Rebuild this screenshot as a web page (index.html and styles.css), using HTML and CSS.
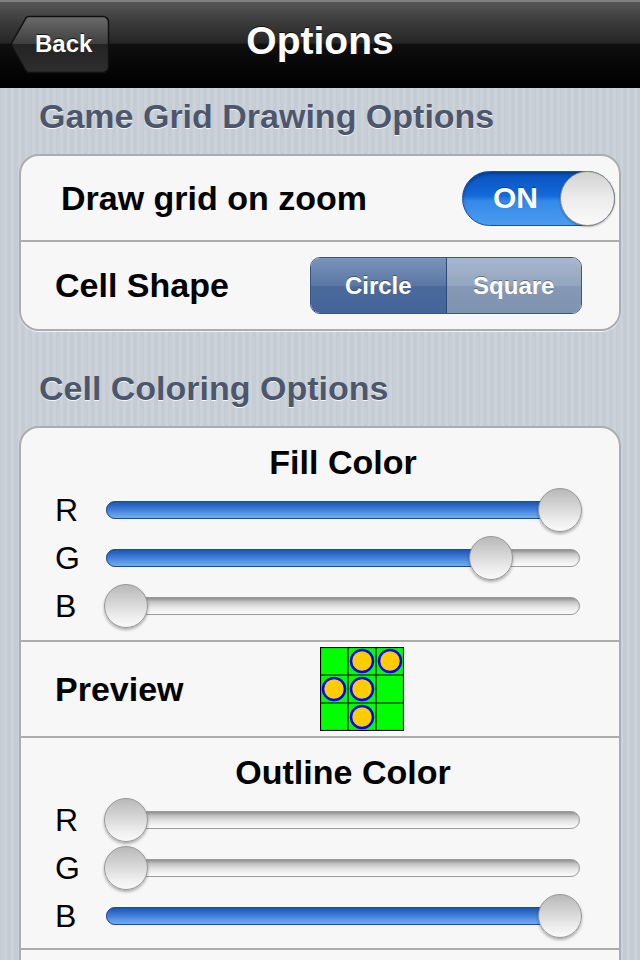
FILE: index.html
```html
<!DOCTYPE html>
<html lang="en">
<head>
    <meta charset="UTF-8">
    <meta name="viewport" content="width=device-width, initial-scale=1.0">
    <title>Options</title>
    <link rel="stylesheet" href="styles.css">
</head>
<body>
    <header class="navbar">
        <a class="back-btn" href="#">
            <svg class="back-shape" width="100" height="60" viewBox="0 0 100 60">
                <defs>
                    <linearGradient id="backFill" x1="0" y1="0" x2="0" y2="1">
                        <stop offset="0" stop-color="#6b6b6b"/>
                        <stop offset="0.5" stop-color="#3d3d3d"/>
                        <stop offset="0.5" stop-color="#242424"/>
                        <stop offset="1" stop-color="#2e2e2e"/>
                    </linearGradient>
                </defs>
                <path d="M19 1.5 H93 A5.5 5.5 0 0 1 98.5 7 V52 A5.5 5.5 0 0 1 93 57.5 H19 Q17 57.5 16 56 L2 31.5 Q1.2 29.5 2 27.5 L16 3 Q17 1.5 19 1.5 Z" fill="url(#backFill)" stroke="#111" stroke-width="1.5"/>
            </svg>
            <span class="back-label">Back</span>
        </a>
        <h1 class="nav-title">Options</h1>
        <span></span>
    </header>

    <main class="content">
        <h2 class="group-title">Game Grid Drawing Options</h2>
        <section class="card">
            <div class="row row-switch">
                <span class="row-label">Draw grid on zoom</span>
                <div class="switch">
                    <span class="switch-text">ON</span>
                    <span class="switch-knob"></span>
                </div>
            </div>
            <div class="row row-segment">
                <span class="row-label">Cell Shape</span>
                <div class="segmented">
                    <span class="seg active">Circle</span>
                    <span class="seg">Square</span>
                </div>
            </div>
        </section>

        <h2 class="group-title second">Cell Coloring Options</h2>
        <section class="card">
            <div class="color-block">
                <span class="block-title">Fill Color</span>
                <span class="channel">R</span>
                <div class="track" style="--v: 1"><div class="fill"></div><span class="thumb"></span></div>
                <span class="channel">G</span>
                <div class="track" style="--v: 0.84"><div class="fill"></div><span class="thumb"></span></div>
                <span class="channel">B</span>
                <div class="track" style="--v: 0"><div class="fill"></div><span class="thumb"></span></div>
            </div>

            <div class="row row-preview">
                <span class="row-label">Preview</span>
                <svg class="preview" width="84" height="84" viewBox="0 0 84 84">
                    <rect x="0.5" y="0.5" width="83" height="83" fill="#00ff00" stroke="#000" stroke-width="1.2"/>
                    <path d="M28 0 V84 M56 0 V84 M0 28 H84 M0 56 H84" stroke="#000" stroke-width="1.2"/>
                    <g fill="#ffcc00" stroke="#0000ff" stroke-width="2.5">
                        <circle cx="42" cy="14" r="11"/>
                        <circle cx="70" cy="14" r="11"/>
                        <circle cx="14" cy="42" r="11"/>
                        <circle cx="42" cy="42" r="11"/>
                        <circle cx="42" cy="70" r="11"/>
                    </g>
                </svg>
            </div>

            <div class="color-block">
                <span class="block-title">Outline Color</span>
                <span class="channel">R</span>
                <div class="track" style="--v: 0"><div class="fill"></div><span class="thumb"></span></div>
                <span class="channel">G</span>
                <div class="track" style="--v: 0"><div class="fill"></div><span class="thumb"></span></div>
                <span class="channel">B</span>
                <div class="track" style="--v: 1"><div class="fill"></div><span class="thumb"></span></div>
            </div>

            <div class="row row-empty"></div>
        </section>
    </main>
</body>
</html>
```

FILE: styles.css
```css
html, body {
    height: 100%;
    overflow: hidden;
}

body {
    margin: 0;
    font-family: "Liberation Sans", Arial, sans-serif;
    background: repeating-linear-gradient(90deg, #c5ccd4 0, #c5ccd4 4px, #cbd2d9 4px, #cbd2d9 7px);
    color: #000;
}

/* top bar */
.navbar {
    height: 88px;
    box-sizing: border-box;
    display: grid;
    grid-template-columns: 1fr auto 1fr;
    align-items: center;
    padding: 0 10px;
    border-top: 2px solid #808080;
    border-bottom: 1px solid #000;
    background: linear-gradient(#565656 0%, #3a3a3a 25%, #262626 48%, #0f0f0f 50%, #050505 80%, #000 100%);
}

.back-btn {
    position: relative;
    width: 100px;
    height: 60px;
    display: flex;
    align-items: center;
    text-decoration: none;
}

.back-shape {
    position: absolute;
    left: 0;
    top: 0;
}

.back-label {
    position: relative;
    padding-left: 25px;
    margin-top: -2px;
    color: #fff;
    font-size: 24px;
    font-weight: bold;
    text-shadow: 0 -1px 0 rgba(0, 0, 0, 0.7);
}

.nav-title {
    margin: 0 0 7px;
    color: #fff;
    font-size: 39px;
    font-weight: bold;
    text-shadow: 0 -1px 0 rgba(0, 0, 0, 0.7);
}

/* grouped list */
.content {
    padding: 0 19px;
}

.group-title {
    margin: 0;
    padding: 8px 0 18px 20px;
    line-height: 40px;
    font-size: 34px;
    font-weight: bold;
    color: #4c566c;
    text-shadow: 0 1px 0 rgba(255, 255, 255, 0.85);
}

.group-title.second {
    padding-top: 37px;
}

.card {
    background: #f7f7f7;
    border: 2px solid #aaadb1;
    border-radius: 20px;
    box-shadow: 0 1px 0 rgba(255, 255, 255, 0.7);
}

.row {
    display: flex;
    align-items: center;
    justify-content: space-between;
}

.row + .row,
.row + .color-block,
.color-block + .row {
    border-top: 2px solid #acacac;
}

.row-label {
    font-size: 34px;
    font-weight: bold;
}

.row-switch {
    height: 84px;
    padding: 0 4px 0 40px;
}

.row-segment {
    height: 87px;
    padding: 0 37px 0 34px;
}

.row-preview {
    height: 94px;
    padding: 0 0 0 34px;
    justify-content: flex-start;
}

.row-empty {
    height: 80px;
}

/* switch */
.switch {
    width: 153px;
    height: 55px;
    box-sizing: border-box;
    border-radius: 28px;
    border: 1px solid #1f4f96;
    background: linear-gradient(#0652c0 0%, #1569d8 45%, #3489e8 55%, #4b9bf0 100%);
    display: flex;
    align-items: center;
    justify-content: space-between;
    box-shadow: inset 0 2px 3px rgba(0, 0, 0, 0.3);
}

.switch-text {
    padding-left: 30px;
    color: #fff;
    font-size: 30px;
    font-weight: bold;
    text-shadow: 0 -1px 0 rgba(0, 0, 0, 0.3);
}

.switch-knob {
    width: 55px;
    height: 55px;
    margin-right: -1px;
    box-sizing: border-box;
    border-radius: 50%;
    border: 1px solid #8e8e8e;
    background: linear-gradient(#d2d2d2 0%, #ececec 50%, #fafafa 100%);
    box-shadow: 0 1px 2px rgba(0, 0, 0, 0.3);
}

/* segmented control */
.segmented {
    width: 272px;
    height: 57px;
    box-sizing: border-box;
    display: flex;
    border: 1px solid #3a5682;
    border-radius: 10px;
    overflow: hidden;
}

.seg {
    flex: 1;
    display: flex;
    align-items: center;
    justify-content: center;
    color: #fff;
    font-size: 24px;
    font-weight: bold;
    text-shadow: 0 -1px 0 rgba(0, 0, 0, 0.35);
    background: linear-gradient(#a8b7cc 0%, #93a5bf 50%, #8598b5 52%, #7f93b1 100%);
}

.seg.active {
    border-right: 1px solid #2c4878;
    background: linear-gradient(#7a94bb 0%, #5a77a4 50%, #4b6a9b 52%, #44649a 100%);
}

/* colour sliders */
.color-block {
    display: grid;
    grid-template-columns: 51px 1fr;
    grid-template-rows: 44px;
    grid-auto-rows: 48px;
    align-items: center;
    padding: 14px 39px 10px 34px;
}

.row-preview + .color-block {
    padding-bottom: 8px;
}

.block-title {
    grid-column: 2;
    align-self: start;
    line-height: 40px;
    text-align: center;
    font-size: 34px;
    font-weight: bold;
}

.channel {
    grid-column: 1;
    font-size: 32px;
}

.track {
    position: relative;
    height: 18px;
    box-sizing: border-box;
    border-radius: 9px;
    border: 1px solid #9a9a9a;
    background: linear-gradient(#8f8f8f 0%, #c4c4c4 25%, #e8e8e8 60%, #fbfbfb 100%);
}

.fill {
    position: absolute;
    left: -1px;
    top: -1px;
    bottom: -1px;
    width: calc(var(--v) * (100% - 38px) + 19px);
    box-sizing: border-box;
    border-radius: 9px;
    border: 1px solid #1a4a9b;
    background: linear-gradient(#1d55b3 0%, #3a76d2 40%, #5b98e8 75%, #74acf2 100%);
}

.track[style="--v: 0"] .fill {
    display: none;
}

.thumb {
    position: absolute;
    top: 50%;
    left: calc(var(--v) * (100% - 38px) - 3px);
    width: 44px;
    height: 44px;
    margin-top: -22px;
    box-sizing: border-box;
    border-radius: 50%;
    border: 1px solid #969696;
    background: linear-gradient(#b9b9b9 0%, #d4d4d4 40%, #ededed 75%, #fafafa 100%);
    box-shadow: 0 2px 3px rgba(0, 0, 0, 0.3);
}

.preview {
    margin-left: 136px;
    display: block;
}
```
